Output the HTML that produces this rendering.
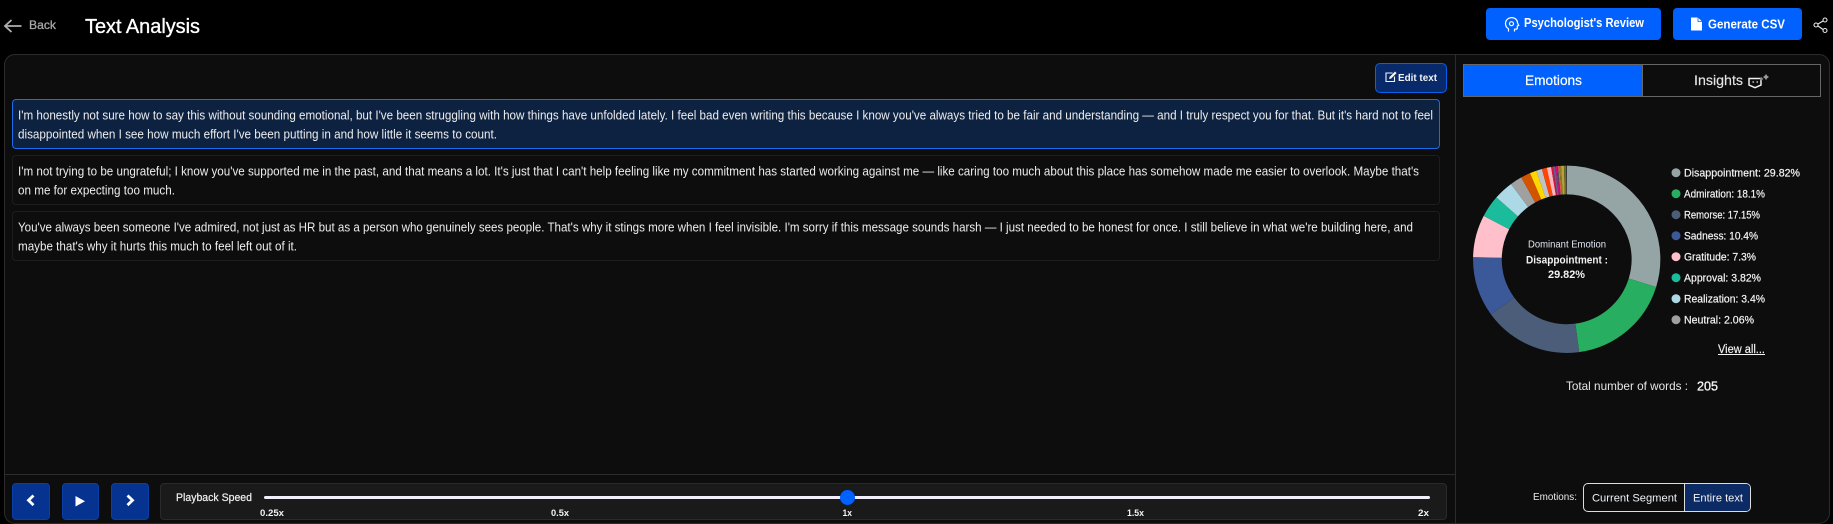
<!DOCTYPE html>
<html lang="en">
<head>
<meta charset="utf-8">
<title>Text Analysis</title>
<style>
html,body{margin:0;padding:0;background:#000;width:1833px;height:524px;overflow:hidden}
body{position:relative;font-family:"Liberation Sans",sans-serif}
.b{position:absolute;box-sizing:border-box}
svg.o{position:absolute;left:0;top:0}
text{font-family:"Liberation Sans",sans-serif;fill:#f2f2f2}
.p{font-size:13.2px;fill:#ececec}
.l{font-size:11.4px;fill:#f4f4f4;stroke:#f4f4f4;stroke-width:.2}
.s{font-size:9px;font-weight:bold;fill:#f4f4f4}
</style>
</head>
<body>
<div class="b" style="left:4px;top:54px;width:1826px;height:470px;background:#0d0d0d;border:1px solid #2c2c2c;border-radius:11px"></div>
<div class="b" style="left:1455px;top:55px;width:1px;height:468px;background:#2c2c2c"></div>
<div class="b" style="left:5px;top:474px;width:1450px;height:1px;background:#2c2c2c"></div>

<div class="b" style="left:1486px;top:8px;width:175px;height:32px;background:#0061ff;border-radius:4px"></div>
<div class="b" style="left:1673px;top:8px;width:129px;height:32px;background:#0061ff;border-radius:4px"></div>

<div class="b" style="left:1375px;top:63px;width:72px;height:30px;background:#082a6b;border:1px solid #0b5fe8;border-radius:5px"></div>

<div class="b" style="left:1463px;top:64px;width:358px;height:33px;border:1px solid #666"></div>
<div class="b" style="left:1463px;top:64px;width:180px;height:33px;background:#0061ff;border:1px solid #666"></div>

<div class="b" style="left:12px;top:99px;width:1428px;height:50px;background:#0d2241;border:1px solid #1a6cec;border-radius:4px"></div>
<div class="b" style="left:12px;top:155px;width:1428px;height:50px;border:1px solid #1e1e1e;border-radius:4px"></div>
<div class="b" style="left:12px;top:211px;width:1428px;height:50px;border:1px solid #1e1e1e;border-radius:4px"></div>

<div class="b" style="left:12px;top:483px;width:38px;height:37px;background:#05338f;border:1px solid #0a3fa8;border-radius:4px"></div>
<div class="b" style="left:62px;top:483px;width:37px;height:37px;background:#05338f;border:1px solid #0a3fa8;border-radius:4px"></div>
<div class="b" style="left:111px;top:483px;width:38px;height:37px;background:#05338f;border:1px solid #0a3fa8;border-radius:4px"></div>

<div class="b" style="left:160px;top:483px;width:1287px;height:37px;background:#1a1a1a;border:1px solid #2a2a2a;border-radius:4px"></div>
<div class="b" style="left:264px;top:496px;width:1166px;height:3px;background:#f1effa;border-radius:2px"></div>
<div class="b" style="left:840px;top:490px;width:15px;height:15px;background:#0061ff;border-radius:50%"></div>

<div class="b" style="left:1583px;top:483px;width:168px;height:29px;border:1px solid #ddd;border-radius:5px;overflow:hidden">
  <div class="b" style="left:100px;top:0;width:66px;height:27px;background:#0c2a63;border-left:1px solid #ddd"></div>
</div>

<svg class="o" width="1833" height="524" viewBox="0 0 1833 524" xmlns="http://www.w3.org/2000/svg">
  <!-- header -->
  <path d="M21.500 26H5.500M11.500 20L5 26l6.500 6" fill="none" stroke="#b0b0b0" stroke-width="1.800"/>
  <text x="29" y="29" font-size="12" textLength="27" lengthAdjust="spacingAndGlyphs" style="fill:#a8a8a8;stroke:#a8a8a8;stroke-width:.3">Back</text>
  <text x="85" y="33" font-size="20" textLength="115" lengthAdjust="spacingAndGlyphs" style="fill:#fff;stroke:#fff;stroke-width:.35">Text Analysis</text>

  <!-- psychologist icon -->
  <g fill="none" stroke="#fff" stroke-width="1.200">
    <path d="M1508.500 31.500v-2.700c-1.900-1.200-3-3-3-5.200 0-3.400 2.800-6 6.200-6 3.500 0 5.800 2.500 5.800 5.300l1.200 2.500-1.400.6v1.700c0 1-.7 1.500-1.500 1.500h-1.300v2.300"/>
    <circle cx="1511.500" cy="23.700" r="2"/>
  </g>
  <text x="1524" y="27" font-size="12.500" font-weight="bold" textLength="120" lengthAdjust="spacingAndGlyphs" style="fill:#fff">Psychologist's Review</text>
  <!-- doc icon -->
  <path d="M1691 17.500h7l4 4v9h-11z" fill="#fff"/><path d="M1698 17.500v4h4" fill="none" stroke="#0061ff" stroke-width=".8"/>
  <text x="1708" y="28.500" font-size="12.500" font-weight="bold" textLength="77" lengthAdjust="spacingAndGlyphs" style="fill:#fff">Generate CSV</text>
  <!-- share -->
  <g fill="none" stroke="#e8e8e8" stroke-width="1.100">
    <circle cx="1825" cy="20" r="2"/><circle cx="1816" cy="25" r="2"/><circle cx="1825" cy="30.500" r="2"/>
    <path d="M1818 24l5-3M1818 26l5 3.500"/>
  </g>

  <!-- edit -->
  <path d="M1392.500 73h-6.500v8.500h8.500v-5" fill="none" stroke="#f2f2f2" stroke-width="1.100"/>
  <path d="M1389.500 77l5.500-5.500 1.600 1.600-5.500 5.500-2 .4z" fill="#f2f2f2"/>
  <text x="1398" y="81" font-size="10.500" font-weight="bold" textLength="39" lengthAdjust="spacingAndGlyphs">Edit text</text>

  <!-- tabs -->
  <text x="1525" y="85" font-size="14" textLength="57" lengthAdjust="spacingAndGlyphs" style="fill:#fff;stroke:#fff;stroke-width:.2">Emotions</text>
  <text x="1694" y="85" font-size="14" textLength="49" lengthAdjust="spacingAndGlyphs" style="fill:#e6e6e6;stroke:#e6e6e6;stroke-width:.15">Insights</text>
  <path d="M1749 78.500h12v6.500l-6 2.700-6-2.700z" fill="none" stroke="#f0f0f0" stroke-width="1.500" stroke-linejoin="miter"/>
  <path d="M1752.500 82h1.500M1756.500 82h1.500" stroke="#f0f0f0" stroke-width="1.200"/>
  <path d="M1766 74l1.200 1.800 1.800 1.200-1.800 1.200-1.200 1.800-1.200-1.800-1.800-1.200 1.800-1.200z" fill="#999"/>
  <path d="M1761.500 77l.9 1 1 .9-1 .9-.9 1-.9-1-1-.9 1-.9z" fill="#888"/>

  <!-- paragraphs -->
  <text class="p" x="18" y="119.500" textLength="1415" lengthAdjust="spacingAndGlyphs">I'm honestly not sure how to say this without sounding emotional, but I've been struggling with how things have unfolded lately. I feel bad even writing this because I know you've always tried to be fair and understanding — and I truly respect you for that. But it's hard not to feel</text>
  <text class="p" x="18" y="138.500" textLength="479" lengthAdjust="spacingAndGlyphs">disappointed when I see how much effort I've been putting in and how little it seems to count.</text>
  <text class="p" x="18" y="175.500" textLength="1401" lengthAdjust="spacingAndGlyphs">I'm not trying to be ungrateful; I know you've supported me in the past, and that means a lot. It's just that I can't help feeling like my commitment has started working against me — like caring too much about this place has somehow made me easier to overlook. Maybe that's</text>
  <text class="p" x="18" y="194.500" textLength="157" lengthAdjust="spacingAndGlyphs">on me for expecting too much.</text>
  <text class="p" x="18" y="231.500" textLength="1395" lengthAdjust="spacingAndGlyphs">You've always been someone I've admired, not just as HR but as a person who genuinely sees people. That's why it stings more when I feel invisible. I'm sorry if this message sounds harsh — I just needed to be honest for once. I still believe in what we're building here, and</text>
  <text class="p" x="18" y="250.500" textLength="279" lengthAdjust="spacingAndGlyphs">maybe that's why it hurts this much to feel left out of it.</text>

  <!-- donut -->
  <g fill="none" stroke-width="28.700" transform="rotate(-90 1566.700 259.300)">
    <circle cx="1566.700" cy="259.300" r="79.300" pathLength="100" stroke="#95a5a6" stroke-dasharray="29.820 100" stroke-dashoffset="0"/>
    <circle cx="1566.700" cy="259.300" r="79.300" pathLength="100" stroke="#27ae60" stroke-dasharray="18.100 100" stroke-dashoffset="-29.820"/>
    <circle cx="1566.700" cy="259.300" r="79.300" pathLength="100" stroke="#4b5d78" stroke-dasharray="17.150 100" stroke-dashoffset="-47.920"/>
    <circle cx="1566.700" cy="259.300" r="79.300" pathLength="100" stroke="#3b5998" stroke-dasharray="10.400 100" stroke-dashoffset="-65.070"/>
    <circle cx="1566.700" cy="259.300" r="79.300" pathLength="100" stroke="#ffc0cb" stroke-dasharray="7.300 100" stroke-dashoffset="-75.470"/>
    <circle cx="1566.700" cy="259.300" r="79.300" pathLength="100" stroke="#1abc9c" stroke-dasharray="3.820 100" stroke-dashoffset="-82.770"/>
    <circle cx="1566.700" cy="259.300" r="79.300" pathLength="100" stroke="#add8e6" stroke-dasharray="3.400 100" stroke-dashoffset="-86.590"/>
    <circle cx="1566.700" cy="259.300" r="79.300" pathLength="100" stroke="#a0a0a0" stroke-dasharray="2.060 100" stroke-dashoffset="-89.990"/>
    <circle cx="1566.700" cy="259.300" r="79.300" pathLength="100" stroke="#d35400" stroke-dasharray="1.650 100" stroke-dashoffset="-92.050"/>
    <circle cx="1566.700" cy="259.300" r="79.300" pathLength="100" stroke="#ffd700" stroke-dasharray="1.150 100" stroke-dashoffset="-93.700"/>
    <circle cx="1566.700" cy="259.300" r="79.300" pathLength="100" stroke="#bdc3c7" stroke-dasharray="1.000 100" stroke-dashoffset="-94.850"/>
    <circle cx="1566.700" cy="259.300" r="79.300" pathLength="100" stroke="#ff4500" stroke-dasharray=".850 100" stroke-dashoffset="-95.850"/>
    <circle cx="1566.700" cy="259.300" r="79.300" pathLength="100" stroke="#ffb6c1" stroke-dasharray=".750 100" stroke-dashoffset="-96.700"/>
    <circle cx="1566.700" cy="259.300" r="79.300" pathLength="100" stroke="#dc143c" stroke-dasharray=".300 100" stroke-dashoffset="-97.450"/>
    <circle cx="1566.700" cy="259.300" r="79.300" pathLength="100" stroke="#6a5a8c" stroke-dasharray=".400 100" stroke-dashoffset="-97.750"/>
    <circle cx="1566.700" cy="259.300" r="79.300" pathLength="100" stroke="#c71585" stroke-dasharray=".300 100" stroke-dashoffset="-98.150"/>
    <circle cx="1566.700" cy="259.300" r="79.300" pathLength="100" stroke="#555" stroke-dasharray=".200 100" stroke-dashoffset="-98.450"/>
    <circle cx="1566.700" cy="259.300" r="79.300" pathLength="100" stroke="#ff6347" stroke-dasharray=".200 100" stroke-dashoffset="-98.650"/>
    <circle cx="1566.700" cy="259.300" r="79.300" pathLength="100" stroke="#8e7d2a" stroke-dasharray=".300 100" stroke-dashoffset="-98.850"/>
    <circle cx="1566.700" cy="259.300" r="79.300" pathLength="100" stroke="#b8a038" stroke-dasharray=".500 100" stroke-dashoffset="-99.150"/>
    <circle cx="1566.700" cy="259.300" r="79.300" pathLength="100" stroke="#6d6d2a" stroke-dasharray=".350 100" stroke-dashoffset="-99.650"/>
  </g>
  <text x="1528" y="247.500" font-size="10.500" textLength="78" lengthAdjust="spacingAndGlyphs" style="fill:#dfe7f2">Dominant Emotion</text>
  <text x="1526" y="263.500" font-size="11" font-weight="bold" textLength="82" lengthAdjust="spacingAndGlyphs">Disappointment :</text>
  <text x="1548" y="278" font-size="11" font-weight="bold" textLength="37" lengthAdjust="spacingAndGlyphs">29.82%</text>

  <!-- legend -->
  <circle cx="1676" cy="172.700" r="4.500" fill="#95a5a6"/><text class="l" x="1684" y="176.700" textLength="116" lengthAdjust="spacingAndGlyphs">Disappointment: 29.82%</text>
  <circle cx="1676" cy="193.700" r="4.500" fill="#27ae60"/><text class="l" x="1684" y="197.700" textLength="81" lengthAdjust="spacingAndGlyphs">Admiration: 18.1%</text>
  <circle cx="1676" cy="214.700" r="4.500" fill="#4b5d78"/><text class="l" x="1684" y="218.700" textLength="76" lengthAdjust="spacingAndGlyphs">Remorse: 17.15%</text>
  <circle cx="1676" cy="235.700" r="4.500" fill="#3b5998"/><text class="l" x="1684" y="239.700" textLength="74" lengthAdjust="spacingAndGlyphs">Sadness: 10.4%</text>
  <circle cx="1676" cy="256.700" r="4.500" fill="#ffc0cb"/><text class="l" x="1684" y="260.700" textLength="72" lengthAdjust="spacingAndGlyphs">Gratitude: 7.3%</text>
  <circle cx="1676" cy="277.700" r="4.500" fill="#1abc9c"/><text class="l" x="1684" y="281.700" textLength="77" lengthAdjust="spacingAndGlyphs">Approval: 3.82%</text>
  <circle cx="1676" cy="298.700" r="4.500" fill="#add8e6"/><text class="l" x="1684" y="302.700" textLength="81" lengthAdjust="spacingAndGlyphs">Realization: 3.4%</text>
  <circle cx="1676" cy="319.700" r="4.500" fill="#a0a0a0"/><text class="l" x="1684" y="323.700" textLength="70" lengthAdjust="spacingAndGlyphs">Neutral: 2.06%</text>

  <text x="1718" y="353" font-size="11.500" textLength="47" lengthAdjust="spacingAndGlyphs" style="fill:#f4f4f4;stroke:#f4f4f4;stroke-width:.15">View all...</text>
  <rect x="1718" y="354" width="47" height="1" fill="#f4f4f4"/>

  <text x="1566" y="390" font-size="12" textLength="122" lengthAdjust="spacingAndGlyphs" style="fill:#e6e6e6">Total number of words :</text>
  <text x="1697" y="390.500" font-size="13" textLength="21" lengthAdjust="spacingAndGlyphs" style="stroke:#f2f2f2;stroke-width:.35">205</text>

  <!-- emotions toggle -->
  <text x="1533" y="500" font-size="10.500" textLength="44" lengthAdjust="spacingAndGlyphs" style="fill:#e8e8e8">Emotions:</text>
  <text x="1592" y="501.500" font-size="11" textLength="85" lengthAdjust="spacingAndGlyphs" style="fill:#eef2f8">Current Segment</text>
  <text x="1693" y="501.500" font-size="11" textLength="50" lengthAdjust="spacingAndGlyphs" style="fill:#f2f2f2">Entire text</text>

  <!-- player icons -->
  <path d="M33.500 495.500l-5 4.800 5 4.800" fill="none" stroke="#fff" stroke-width="2.800"/>
  <path d="M75.500 496v10.500l9.500-5.200z" fill="#fff"/>
  <path d="M127.500 495.500l5 4.800-5 4.800" fill="none" stroke="#fff" stroke-width="2.800"/>

  <!-- speed -->
  <text x="176" y="501" font-size="11" textLength="76" lengthAdjust="spacingAndGlyphs" style="fill:#f0f0f0;stroke:#f0f0f0;stroke-width:.2">Playback Speed</text>
  <text class="s" x="260" y="516" textLength="24" lengthAdjust="spacingAndGlyphs">0.25x</text>
  <text class="s" x="551" y="516" textLength="18" lengthAdjust="spacingAndGlyphs">0.5x</text>
  <text class="s" x="842.500" y="516" textLength="9.500" lengthAdjust="spacingAndGlyphs">1x</text>
  <text class="s" x="1127" y="516" textLength="17" lengthAdjust="spacingAndGlyphs">1.5x</text>
  <text class="s" x="1418" y="516" textLength="11" lengthAdjust="spacingAndGlyphs">2x</text>
</svg>
</body>
</html>
